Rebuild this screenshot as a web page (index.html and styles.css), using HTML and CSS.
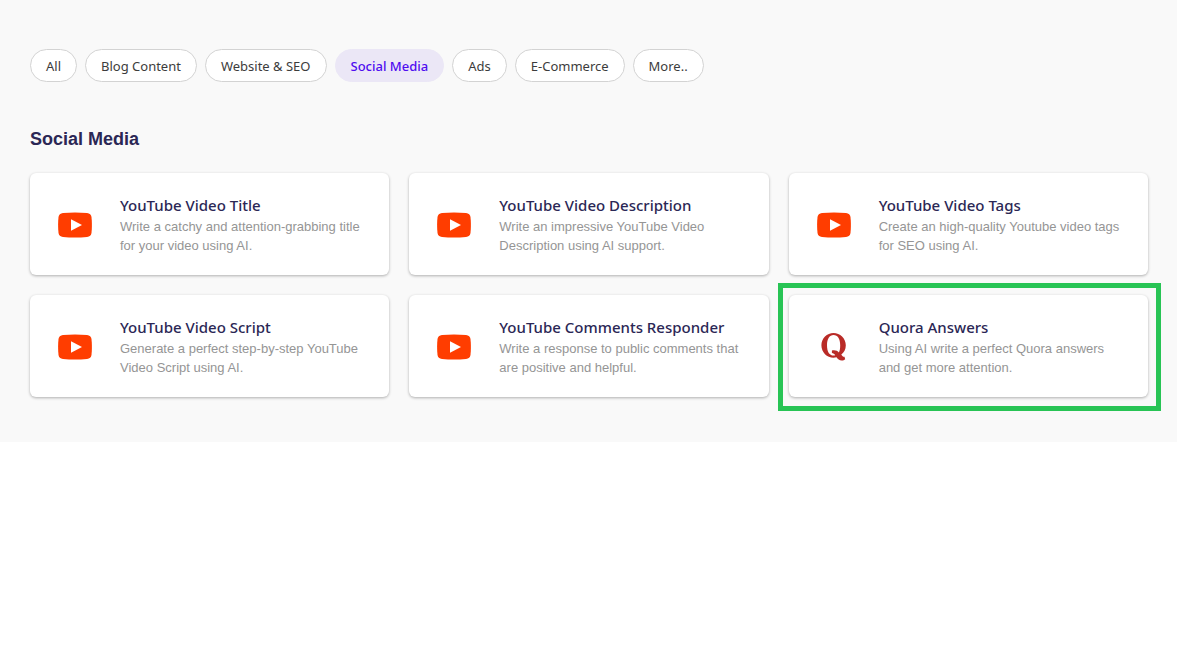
FILE: index.html
```html
<!DOCTYPE html>
<html lang="en">
<head>
<meta charset="utf-8">
<meta name="viewport" content="width=device-width, initial-scale=1">
<title>Social Media templates</title>
<link rel="stylesheet" href="styles.css">
</head>
<body>
<svg class="sprite" aria-hidden="true">
  <symbol id="video" viewBox="0 0 34 26">
    <path fill="#ff3d00" d="M5 1Q17 0 29 1Q33 1.400 33.500 5Q34.300 13 33.500 21Q33 24.600 29 25Q17 26 5 25Q1 24.600.5 21Q-.3 13 .5 5Q1 1.400 5 1Z"/>
    <path fill="#fff" d="M13 7.300 24 13 13 18.700Z"/>
  </symbol>
  <symbol id="quora" viewBox="0 0 26 28">
    <path fill="#b92b27" fill-rule="evenodd" d="M12.500 0C19 0 24.800 5.200 24.800 12.300C24.800 16.500 23 19.500 20.300 21.500C21.300 23.300 22.300 24 23.500 23.800L24.200 26.300C23.200 27.200 22.200 27.500 20.800 27.500C18.300 27.500 16.700 26.300 15.500 24.300C14.500 24.600 13.500 24.700 12.500 24.700C6 24.700.4 19.500.4 12.300C.4 5.200 6 0 12.500 0ZM12.500 2C8.500 2 6 5.800 6 12.300C6 18.900 8.500 22.600 12.500 22.600Q13.500 22.600 14.200 22.300C13.300 20.800 12.500 20.200 10.900 20L10.900 17.600C13.900 16.900 16.400 17.700 17.900 19.600C18.800 17.800 19.200 15.500 19.200 12.300C19.200 5.800 16.800 2 12.500 2Z"/>
  </symbol>
</svg>
<main class="templates">
  <nav class="filters" aria-label="Categories">
    <button class="pill" type="button">All</button>
    <button class="pill" type="button">Blog Content</button>
    <button class="pill" type="button">Website &amp; SEO</button>
    <button class="pill pill-active" type="button" aria-pressed="true">Social Media</button>
    <button class="pill" type="button">Ads</button>
    <button class="pill" type="button">E-Commerce</button>
    <button class="pill" type="button">More..</button>
  </nav>
  <h2 class="heading">Social Media</h2>
  <section class="grid">
    <article class="card">
      <svg class="icon" aria-hidden="true"><use href="#video"/></svg>
      <div class="body"><h3 class="title">YouTube Video Title</h3><p class="text">Write a catchy and attention-grabbing title for your video using AI.</p></div>
    </article>
    <article class="card">
      <svg class="icon" aria-hidden="true"><use href="#video"/></svg>
      <div class="body"><h3 class="title">YouTube Video Description</h3><p class="text">Write an impressive YouTube Video Description using AI support.</p></div>
    </article>
    <article class="card">
      <svg class="icon" aria-hidden="true"><use href="#video"/></svg>
      <div class="body"><h3 class="title">YouTube Video Tags</h3><p class="text">Create an high-quality Youtube video tags for SEO using AI.</p></div>
    </article>
    <article class="card">
      <svg class="icon" aria-hidden="true"><use href="#video"/></svg>
      <div class="body"><h3 class="title">YouTube Video Script</h3><p class="text">Generate a perfect step-by-step YouTube Video Script using AI.</p></div>
    </article>
    <article class="card">
      <svg class="icon" aria-hidden="true"><use href="#video"/></svg>
      <div class="body"><h3 class="title">YouTube Comments Responder</h3><p class="text">Write a response to public comments that are positive and helpful.</p></div>
    </article>
    <article class="card card-marked">
      <svg class="icon icon-quora" aria-hidden="true"><use href="#quora"/></svg>
      <div class="body"><h3 class="title">Quora Answers</h3><p class="text">Using AI write a perfect Quora answers and get more attention.</p></div>
    </article>
  </section>
</main>
</body>
</html>
```

FILE: styles.css
```css
* { box-sizing: border-box; }
body { margin: 0; background: #fff; font-family: "Liberation Sans", Arial, sans-serif; }
.sprite { display: none; }
.templates { background: #f9f9f9; padding: 49px 29px 45px 30px; }
.filters { display: flex; flex-wrap: wrap; gap: 8px; }
.pill {
  height: 33px;
  padding: 0 15px;
  border: 1px solid #d3d3d3;
  border-radius: 17px;
  background: #fff;
  color: #3c3c3c;
  font: 13px "Noto Sans", sans-serif;
  cursor: pointer;
}
.pill-active { background: #ebe7f6; border-color: #ebe7f6; color: #4f0df0; font-weight: 500; }
.heading { margin: 46px 0 23px; font-size: 18px; line-height: 22px; color: #2b2755; }
.grid { display: grid; grid-template-columns: repeat(3, 1fr); gap: 20px; }
.card {
  position: relative;
  display: flex;
  align-items: center;
  min-height: 102px;
  padding: 22px 20px 20px 0;
  border-radius: 6px;
  background: #fff;
  box-shadow: 0 1px 3px rgba(0, 0, 0, .3);
}
.icon { flex: none; width: 34px; height: 26px; margin: 0 28px; }
.icon-quora { width: 26px; height: 28px; margin: 0 32px; }
.title { margin: 0 0 2px; font: 500 15px/20px "Noto Sans", sans-serif; color: #2b2755; }
.text { margin: 0; font-size: 13px; line-height: 19px; color: #959595; }
.card-marked::after {
  content: "";
  position: absolute;
  inset: -12px -13px -14px -11px;
  border: 5px solid #28c455;
  pointer-events: none;
}
```
